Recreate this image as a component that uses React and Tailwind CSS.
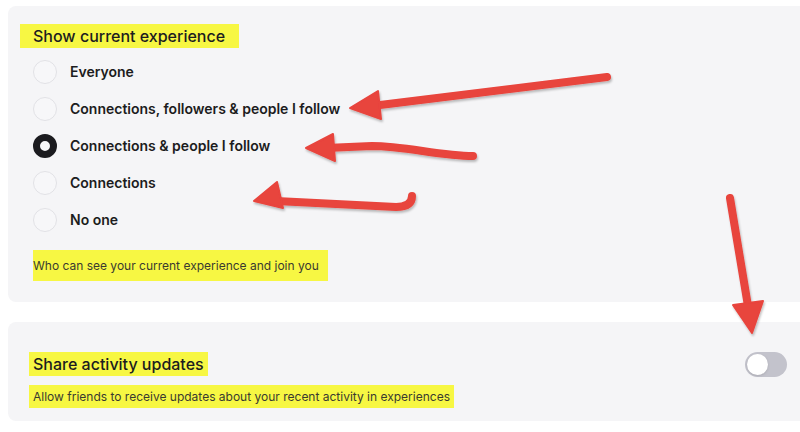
import { useState } from "react";

const options = [
  "Everyone",
  "Connections, followers & people I follow",
  "Connections & people I follow",
  "Connections",
  "No one",
];

function Radio({ checked }) {
  return checked ? (
    <span className="h-6 w-6 shrink-0 rounded-full border-[7px] border-[#1b1b1f] bg-[#f6f6f8]" />
  ) : (
    <span className="h-6 w-6 shrink-0 rounded-full border border-[#e2e2e6] bg-[#f7f7f9]" />
  );
}

function Arrows() {
  return (
    <svg className="pointer-events-none absolute left-0 top-0" width="800" height="432" viewBox="0 0 800 432">
      <defs>
        <filter id="sh" x="-10%" y="-10%" width="120%" height="130%">
          <feDropShadow dx="1" dy="2" stdDeviation="1.2" floodColor="#000" floodOpacity="0.25" />
        </filter>
      </defs>
      <g fill="#e8443d" stroke="#e8443d" strokeLinecap="round" strokeLinejoin="round" filter="url(#sh)">
        <path d="M607 77 L372 106" fill="none" strokeWidth="8" />
        <polygon points="350,108 378,91 381,119" strokeWidth="2" />
        <path d="M473 156 C 440 156, 405 146, 372 146 L 326 148" fill="none" strokeWidth="8" />
        <polygon points="306,148 333,134 335,161" strokeWidth="2" />
        <path d="M412 196 Q 412 207 396 207 L 276 201" fill="none" strokeWidth="8" />
        <polygon points="254,201 277,182 283,208" strokeWidth="2" />
        <path d="M730 198 L 748 306" fill="none" strokeWidth="8" />
        <polygon points="733,305 763,301 752,333" strokeWidth="2" />
      </g>
    </svg>
  );
}

export default function App() {
  const [selected, setSelected] = useState(2);
  const [share, setShare] = useState(false);

  return (
    <div className="relative h-[432px] w-[800px] overflow-hidden bg-white font-['Inter',sans-serif] text-[#1c1c20]">
      <div className="pl-2 pt-[6px]">
        <section className="h-[296px] w-[820px] rounded-lg bg-[#f5f5f7] pl-3 pt-[18px]">
          <h2 className="inline-block h-6 bg-[#f7f743] pl-[13px] pr-[14px] text-[16px] font-medium leading-6">Show current experience</h2>
          <div className="mt-[5px] pl-[13px]">
            {options.map((label, i) => (
              <button key={label} onClick={() => setSelected(i)} className="flex h-[37px] items-center gap-[13px] text-left">
                <Radio checked={selected === i} />
                <span className="text-[14px] font-semibold">{label}</span>
              </button>
            ))}
          </div>
          <p className="ml-[13px] mt-[12px] inline-block h-[31px] bg-[#f7f743] pr-[9px] text-[12px] leading-[31px] text-[#3a3a30]">Who can see your current experience and join you</p>
        </section>
        <section className="mt-5 flex h-[99px] w-[820px] items-start rounded-lg bg-[#f5f5f7] pl-[21px] pt-[30px]">
          <div className="flex-1">
            <h2 className="inline-block h-6 bg-[#f7f743] px-1 text-[16px] font-medium leading-6">Share activity updates</h2>
            <div>
              <p className="mt-[9px] inline-block h-[23px] bg-[#f7f743] px-1 text-[12px] leading-[23px] text-[#3a3a30]">Allow friends to receive updates about your recent activity in experiences</p>
            </div>
          </div>
          <button onClick={() => setShare(!share)} className={`mr-[41px] flex h-[25px] w-[42px] items-center rounded-full p-[2px] ${share ? "justify-end bg-[#1b1b1f]" : "justify-start bg-[#c3c3cc]"}`}>
            <span className="h-[21px] w-[21px] rounded-full bg-white shadow-sm" />
          </button>
        </section>
      </div>
      <Arrows />
    </div>
  );
}
